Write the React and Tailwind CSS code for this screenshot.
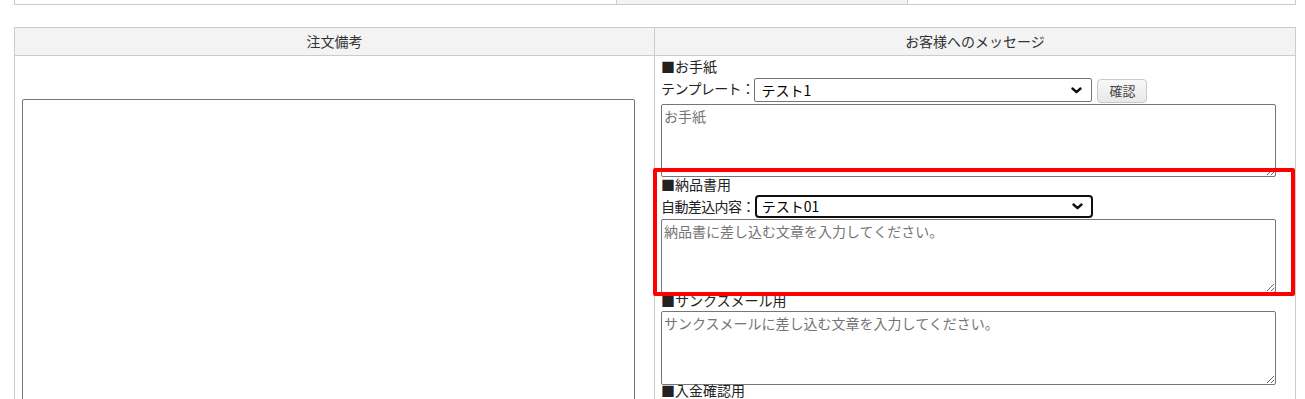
import React from 'react';

const font = { fontFamily: '"Noto Sans CJK JP", "Noto Sans", sans-serif' };

const Chevron = () => (
    <svg width="11" height="7" viewBox="0 0 11 7" className="shrink-0">
        <polyline points="1.5,1.5 5.5,5.2 9.5,1.5" fill="none" stroke="#111" strokeWidth="2.4" strokeLinecap="round" strokeLinejoin="round" />
    </svg>
);

const FakeSelect = ({ value, focused }) => (
    <div
        className={
            focused
                ? 'flex items-center justify-between w-[338px] h-[23px] pl-[5px] pr-[8px] border-2 border-[#101010] rounded-[4px] bg-white text-[14px] text-black'
                : 'flex items-center justify-between w-[338px] h-[24px] pl-[6px] pr-[9px] border border-[#767676] rounded-[2px] bg-white text-[14px] text-black'
        }
    >
        <span className="leading-none">{value}</span>
        <Chevron />
    </div>
);

const Note = ({ placeholder, tall }) => (
    <textarea
        placeholder={placeholder}
        className={
            (tall ? 'h-[74px] ' : 'h-[73px] ') +
            'block w-[615px] px-[2px] py-[1px] border border-[#767676] rounded-[2px] bg-white text-[14px] leading-[20px] placeholder:text-[#757575] outline-none'
        }
        style={font}
    />
);

const Label = ({ children, short, last }) => (
    <div
        className={
            (short ? 'h-[17px] ' : 'h-[18px] ') +
            (last ? 'leading-[11px] ' : 'leading-[15px] ') +
            'text-[14px] text-[#222]'
        }
    >
        ■{children}
    </div>
);

export default function App() {
    return (
        <div className="h-screen bg-white overflow-hidden" style={font}>
            {/* previous table row, cut off at the top */}
            <div className="ml-[14px] w-[1282px] h-[5px] flex border-x border-b border-[#cccccc]">
                <div className="w-[602px] border-r border-[#cccccc]" />
                <div className="w-[291px] bg-[#f2f3f2] border-r border-[#cccccc]" />
                <div className="flex-1" />
            </div>

            <div className="ml-[14px] mt-[22px] w-[1282px] border border-[#cccccc]">
                <div className="flex h-[28px] bg-[#f2f3f2] border-b border-[#cccccc] text-[14px] text-[#333]">
                    <div className="w-[640px] border-r border-[#cccccc] flex items-center justify-center">注文備考</div>
                    <div className="flex-1 flex items-center justify-center">お客様へのメッセージ</div>
                </div>

                <div className="flex h-[400px]">
                    <div className="w-[640px] border-r border-[#cccccc] pl-[7px] pt-[43px]">
                        <textarea className="block w-[613px] h-[340px] border border-[#767676] rounded-[2px] bg-white outline-none resize-none" />
                    </div>

                    <div className="relative flex-1 pl-[6px] pt-[3px]">
                        <Label>お手紙</Label>
                        <div className="flex items-start h-[27px] text-[14px] text-[#222]">
                            <span className="mt-[3px] leading-[17px] tracking-[-0.6px]">テンプレート：</span>
                            <div className="mt-[1px]">
                                <FakeSelect value="テスト1" />
                            </div>
                            <button className="ml-[5px] mt-[2px] w-[50px] h-[24px] rounded-[4px] border border-[#c9c9d0] bg-gradient-to-b from-[#f8f8f8] to-[#e8e8e8] text-[13px] text-[#444]">
                                確認
                            </button>
                        </div>
                        <Note placeholder="お手紙" />

                        <Label short>納品書用</Label>
                        <div className="flex items-center h-[24px] text-[14px] text-[#222]">
                            <span className="leading-[18px] tracking-[-0.6px]">自動差込内容：</span>
                            <FakeSelect value="テスト01" focused />
                        </div>
                        <div className="h-[1px]" />
                        <Note placeholder="納品書に差し込む文章を入力してください。" tall />

                        <Label>サンクスメール用</Label>
                        <Note placeholder="サンクスメールに差し込む文章を入力してください。" tall />

                        <Label last>入金確認用</Label>

                        <div className="absolute left-[-2px] top-[112px] w-[642px] h-[128px] border-4 border-[#ff0000] rounded-[2px] pointer-events-none" />
                    </div>
                </div>
            </div>
        </div>
    );
}
